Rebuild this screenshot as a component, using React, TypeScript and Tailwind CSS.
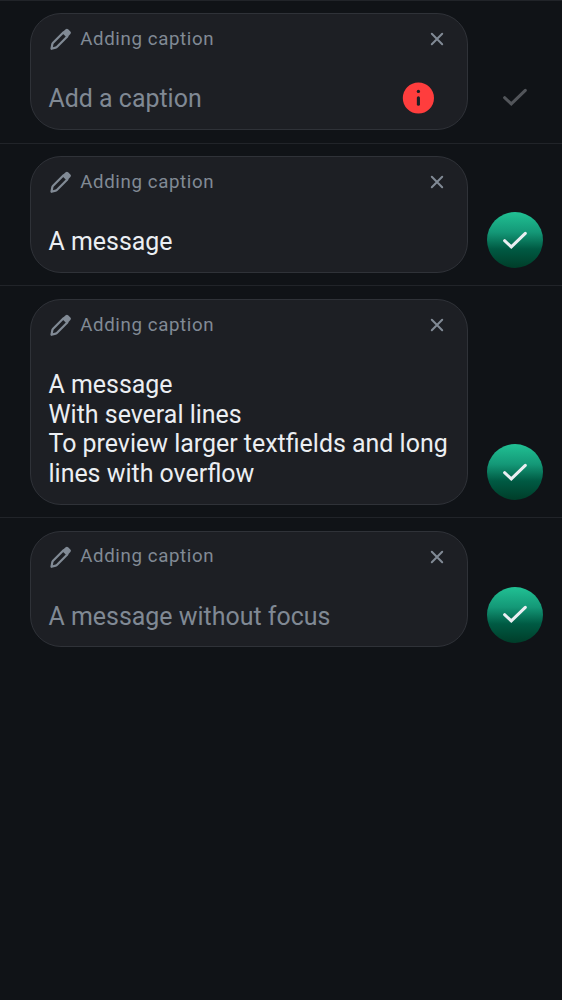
import React from "react";

function PencilIcon() {
  return (
    <svg className="block size-[26px] shrink-0" viewBox="0 0 26 26" fill="none">
      <path
        d="M3.5 22.8 4.300 18.200C4.400 17.600 4.700 17.100 5.100 16.700L15.300 6.500 19.300 10.400 9.100 20.700C8.700 21.100 8.200 21.400 7.600 21.600Z"
        stroke="#818A95"
        strokeWidth="2.200"
        strokeLinejoin="round"
      />
      <path d="M14.200 6.600 17.600 3.300a1.800 1.800 0 0 1 2.500 0L22.400 5.600a1.800 1.800 0 0 1 0 2.500L19.100 11.500Z" fill="#818A95" />
    </svg>
  );
}

function CloseIcon() {
  return (
    <svg className="block size-[14px] shrink-0" viewBox="0 0 14 14" fill="none" stroke="#818A95" strokeWidth="2" strokeLinecap="round">
      <path d="M1.8 1.8 12.2 12.2M12.2 1.8 1.8 12.2" />
    </svg>
  );
}

function ErrorIcon() {
  return (
    <svg className="block size-8" viewBox="0 0 32 32">
      <circle cx="16.4" cy="16" r="15.6" fill="#FF3D3D" />
      <circle cx="16.4" cy="9.4" r="1.65" fill="#1D1F24" />
      <path d="M16.4 15.7v6.6" stroke="#1D1F24" strokeWidth="3.1" strokeLinecap="round" />
    </svg>
  );
}

function CheckIcon({ color }: { color: string }) {
  return (
    <svg className="block h-[19px] w-[26px]" viewBox="0 0 26 19" fill="none" stroke={color} strokeWidth="3" strokeLinecap="round" strokeLinejoin="miter">
      <path d="M2.6 9.7 9.3 15.9 23.3 2.4" />
    </svg>
  );
}

type ComposerProps = {
  lines: string[];
  placeholder?: boolean;
  error?: boolean;
  rowClass: string;
  cardClass: string;
  buttonClass?: string;
};

function Composer({ lines, placeholder = false, error = false, rowClass, cardClass, buttonClass = "mb-[17px]" }: ComposerProps) {
  return (
    <section className={`flex items-end border-t border-[#212429] pl-[30px] ${rowClass}`}>
      <div className={`w-[438px] self-start rounded-[31px] border border-[#2F3238] bg-[#1D1F24] ${cardClass}`}>
        <header className="flex h-[50px] items-center pl-[17px] pr-[23px]">
          <PencilIcon />
          <span className="ml-[6.2px] flex-1 text-[18.7px] leading-[25px] tracking-[0.62px] text-[#818A95]">Adding caption</span>
          <CloseIcon />
        </header>
        <div className="mt-[20px] flex pl-[17.5px]">
          <div className={`w-[404px] whitespace-nowrap text-[24.95px] leading-[29.7px] ${placeholder ? "text-[#808994]" : "text-[#EBEEF2]"}`}>
            {lines.map((line) => (
              <p key={line}>{line}</p>
            ))}
          </div>
          {error && (
            <span className="-ml-[50.5px] -mt-[2px]">
              <ErrorIcon />
            </span>
          )}
        </div>
      </div>
      <button
        aria-label="Send caption"
        className={`ml-[19px] flex size-[56px] items-center justify-center rounded-full ${buttonClass} ${
          error ? "" : "bg-[linear-gradient(180deg,#21C194_0%,#149877_36%,#005A43_66%,#003D29_100%)]"
        }`}
      >
        <CheckIcon color={error ? "#52555A" : "#EBEEF2"} />
      </button>
    </section>
  );
}

export default function App() {
  return (
    <main className="min-h-screen w-[562px] bg-[#101317] font-['Roboto',sans-serif]">
      <Composer
        lines={["Add a caption"]}
        placeholder
        error
        rowClass="h-[143px] pt-[12.4px]"
        cardClass="h-[117px]"
        buttonClass="mb-[17.5px]"
      />
      <Composer lines={["A message"]} rowClass="h-[142px] pt-[12px]" cardClass="h-[117px]" />
      <Composer
        lines={["A message", "With several lines", "To preview larger textfields and long", "lines with overflow"]}
        rowClass="h-[232px] pt-[13px]"
        cardClass="h-[206px]"
      />
      <Composer
        lines={["A message without focus"]}
        placeholder
        rowClass="h-[143px] pt-[12.8px]"
        cardClass="h-[116px]"
        buttonClass="mb-[17.5px]"
      />
    </main>
  );
}
